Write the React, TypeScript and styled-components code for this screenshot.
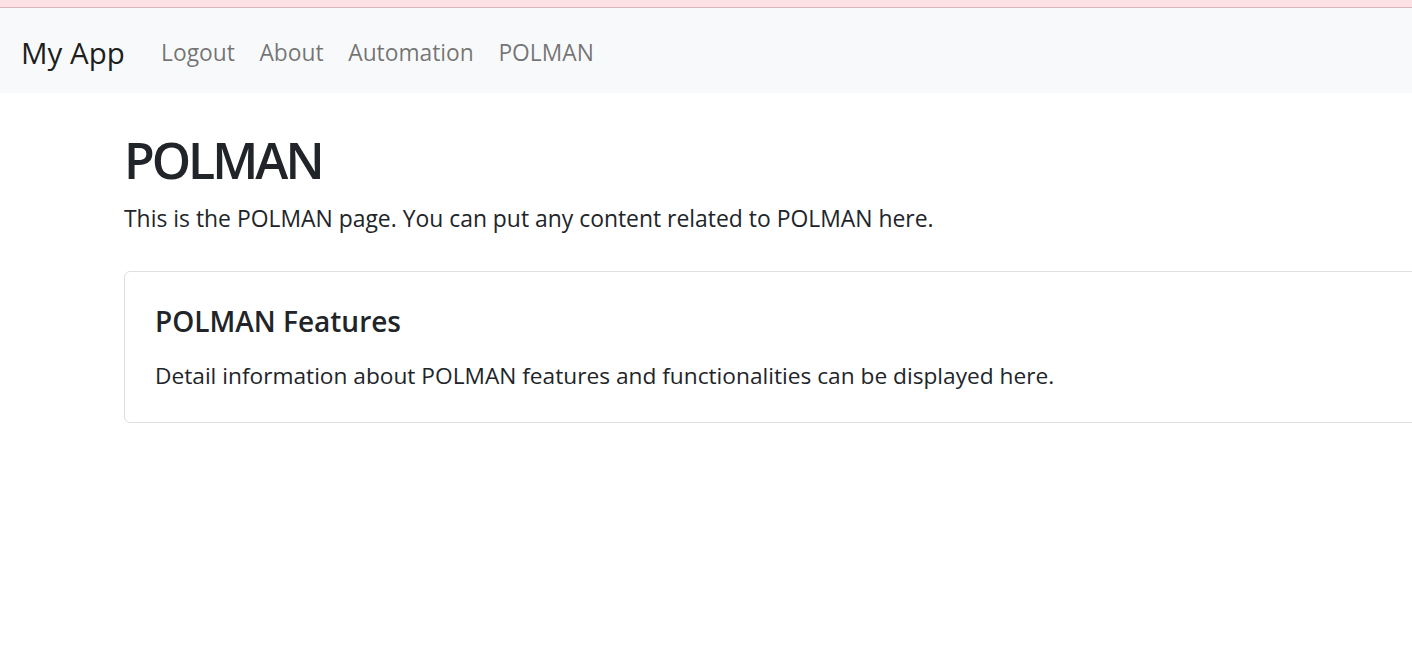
import React from 'react';
import styled, { createGlobalStyle } from 'styled-components';

const GlobalStyle = createGlobalStyle`
  html, body {
    margin: 0;
    padding: 0;
    overflow: hidden;
    background: #ffffff;
  }

  body {
    font-family: "Open Sans", "Noto Sans", sans-serif;
    color: #212529;
  }
`;

const TopStrip = styled.div`
  height: 7px;
  background-color: #fde1e5;
  border-bottom: 1px solid #d9b6bb;
`;

const Navbar = styled.nav`
  display: flex;
  align-items: center;
  height: 85px;
  box-sizing: border-box;
  padding: 3px 21px 0;
  background-color: #f8f9fa;
`;

const Brand = styled.a`
  font-size: 29.5px;
  color: rgba(0, 0, 0, 0.9);
  text-decoration: none;
  margin-right: 24px;
`;

const NavList = styled.ul`
  display: flex;
  list-style: none;
  margin: 0;
  padding: 0;
`;

const NavLink = styled.a`
  display: block;
  padding: 0 12.3px;
  font-size: 22.8px;
  color: rgba(0, 0, 0, 0.55);
  text-decoration: none;
`;

const Main = styled.main`
  padding: 37px 0 0 124px;
  width: 1400px;
`;

const Title = styled.h1`
  margin: 0 0 12px;
  font-size: 50px;
  font-weight: 600;
  letter-spacing: -3px;
  line-height: 1.2;
`;

const Lead = styled.p`
  margin: 0 0 35px;
  font-size: 22.9px;
  line-height: 1.5;
`;

const Card = styled.section`
  border: 1px solid rgba(0, 0, 0, 0.125);
  border-radius: 6px;
  padding: 33px 30px 29px;
`;

const CardTitle = styled.h4`
  margin: 0 0 20px;
  font-size: 28px;
  font-weight: 600;
  line-height: 1.2;
`;

const CardText = styled.p`
  margin: 0;
  font-size: 22.7px;
  line-height: 1.5;
`;

const links = ['Logout', 'About', 'Automation', 'POLMAN'];

export default function App() {
  return (
    <>
      <GlobalStyle />
      <TopStrip />
      <Navbar>
        <Brand href="#">My App</Brand>
        <NavList>
          {links.map((label) => (
            <li key={label}>
              <NavLink href="#">{label}</NavLink>
            </li>
          ))}
        </NavList>
      </Navbar>
      <Main>
        <Title>POLMAN</Title>
        <Lead>This is the POLMAN page. You can put any content related to POLMAN here.</Lead>
        <Card>
          <CardTitle>POLMAN Features</CardTitle>
          <CardText>
            Detail information about POLMAN features and functionalities can be displayed here.
          </CardText>
        </Card>
      </Main>
    </>
  );
}
